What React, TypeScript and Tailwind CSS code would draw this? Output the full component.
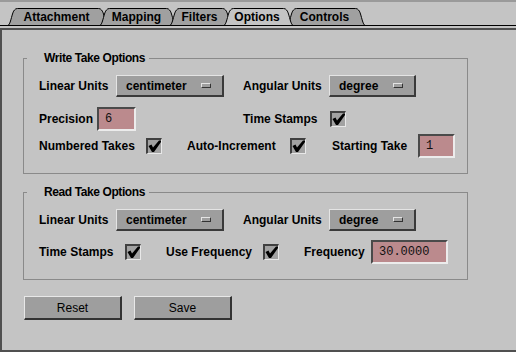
import React from "react";

const TABS = [
  { label: "Attachment", box: "w-[100px] z-[1]", w: 100 },
  { label: "Mapping", box: "w-[76px] -ml-[8px] z-[2]", w: 76 },
  { label: "Filters", box: "w-[62px] -ml-[6px] z-[3]", w: 62 },
  { label: "Options", box: "w-[69px] -ml-[8px] z-[10]", w: 69, active: true },
  { label: "Controls", box: "w-[78px] -ml-[6px] z-[1]", w: 78 },
];

function Tab({ label, box, w, active }: { label: string; box: string; w: number; active?: boolean }) {
  const d = `M0.5 17 C3 15 4 4 6.5 2 Q7.5 0.5 9.5 0.5 L${w - 9.5} 0.5 Q${w - 7.5} 0.5 ${w - 6.5} 2 C${w - 4} 4 ${w - 3} 15 ${w - 0.5} 17`;
  return (
    <div className={`relative h-[17px] flex items-center justify-center pr-[3px] font-bold ${box}`}>
      <svg className="absolute inset-0" width={w} height={17} viewBox={`0 0 ${w} 17`}>
        <path d={d} fill={active ? "#c4c4c4" : "#a0a0a0"} stroke="#000" strokeWidth={1} />
      </svg>
      <span className="relative leading-none">{label}</span>
    </div>
  );
}

function Group({ title, className, children }: { title: string; className: string; children: React.ReactNode }) {
  return (
    <div className={`relative w-[445px] border border-[#8a8a8a] pl-[15px] ${className}`}>
      <span className="absolute -top-[8px] left-[3px] bg-[#c4c4c4] pl-[17px] pr-[4px] leading-[15px] font-bold tracking-[-0.4px]">
        {title}
      </span>
      {children}
    </div>
  );
}

function OptionMenu({ value, w }: { value: string; w: string }) {
  return (
    <div
      className={`h-[22px] ${w} flex items-center justify-between bg-[#9e9e9e] border-t border-l border-b-2 border-r-2 border-t-[#e4e4e4] border-l-[#e4e4e4] border-b-[#3a3a3a] border-r-[#3a3a3a] pl-[9px] pr-[11px] font-bold`}
    >
      <span>{value}</span>
      <span className="w-[10px] h-[5px] bg-[#9e9e9e] border-t border-l border-b border-r border-t-[#e4e4e4] border-l-[#e4e4e4] border-b-[#333] border-r-[#333]" />
    </div>
  );
}

function Check() {
  return (
    <div className="w-[16px] h-[16px] shrink-0 bg-[#a2a2a2] border-t-2 border-l-2 border-b border-r border-t-[#404040] border-l-[#404040] border-b-[#e8e8e8] border-r-[#e8e8e8] flex items-center justify-center">
      <svg width={13} height={13} viewBox="0 0 13 13">
        <path d="M0.5 6 L3.5 4.5 L5 7.5 L11 0.5 L13 0.5 L13 2 L6 12 L4 12 Z" fill="#000" />
      </svg>
    </div>
  );
}

function Field({ value, w }: { value: string; w: string }) {
  return (
    <div
      className={`h-[24px] ${w} shrink-0 flex items-center bg-[#bb8a8d] border-2 border-t-[#4a4a4a] border-l-[#4a4a4a] border-b-[#ececec] border-r-[#ececec] pl-[6px] font-['Liberation_Mono',monospace] text-[#111]`}
    >
      {value}
    </div>
  );
}

function Label({ text, w, className = "" }: { text: string; w: string; className?: string }) {
  return <span className={`${w} shrink-0 whitespace-nowrap font-bold ${className}`}>{text}</span>;
}

function Button({ text, className = "" }: { text: string; className?: string }) {
  return (
    <button className={`w-[98px] h-[24px] bg-[#9e9e9e] border-t border-l border-b-2 border-r-2 border-t-[#e8e8e8] border-l-[#e8e8e8] border-b-[#333] border-r-[#333] text-[12px] ${className}`}>
      {text}
    </button>
  );
}

export default function App() {
  return (
    <div className="w-[516px] h-[352px] overflow-hidden bg-[#c4c4c4] text-black text-[12px] font-['Liberation_Sans',Arial,sans-serif]">
      <div className="h-[2px] bg-[#9a9a9a]" />
      <div className="h-[23px] flex items-end pl-[8px]">
        {TABS.map((t) => (
          <Tab key={t.label} {...t} />
        ))}
      </div>
      <div className="h-[1px] bg-black" />
      <div className="h-[2px]" />

      <div className="h-[324px] border-t-2 border-l-2 border-b-2 border-[#505050] pl-[21px]">
        <Group title="Write Take Options" className="mt-[28px] pt-[16px] pb-[15px]">
          <div className="h-[22px] flex items-center">
            <Label text="Linear Units" w="w-[77px]" />
            <OptionMenu value="centimeter" w="w-[108px]" />
            <Label text="Angular Units" w="w-[86px]" className="ml-[19px]" />
            <OptionMenu value="degree" w="w-[87px]" />
          </div>
          <div className="h-[24px] mt-[10px] flex items-center">
            <Label text="Precision" w="w-[58px]" />
            <Field value="6" w="w-[39px]" />
            <Label text="Time Stamps" w="w-[87px]" className="ml-[107px]" />
            <Check />
          </div>
          <div className="h-[24px] mt-[3px] flex items-center">
            <Label text="Numbered Takes" w="w-[107px]" />
            <Check />
            <Label text="Auto-Increment" w="w-[103px]" className="ml-[25px]" />
            <Check />
            <Label text="Starting Take" w="w-[86px]" className="ml-[26px]" />
            <Field value="1" w="w-[37px]" />
          </div>
        </Group>

        <Group title="Read Take Options" className="mt-[18px] pt-[16px] pb-[15px]">
          <div className="h-[22px] flex items-center">
            <Label text="Linear Units" w="w-[77px]" />
            <OptionMenu value="centimeter" w="w-[108px]" />
            <Label text="Angular Units" w="w-[86px]" className="ml-[19px]" />
            <OptionMenu value="degree" w="w-[87px]" />
          </div>
          <div className="h-[24px] mt-[9px] flex items-center">
            <Label text="Time Stamps" w="w-[86px]" />
            <Check />
            <Label text="Use Frequency" w="w-[97px]" className="ml-[25px]" />
            <Check />
            <Label text="Frequency" w="w-[67px]" className="ml-[25px]" />
            <Field value="30.0000" w="w-[77px]" />
          </div>
        </Group>

        <div className="mt-[16px] ml-[1px] flex gap-[12px]">
          <Button text="Reset" />
          <Button text="Save" />
        </div>
      </div>
    </div>
  );
}
